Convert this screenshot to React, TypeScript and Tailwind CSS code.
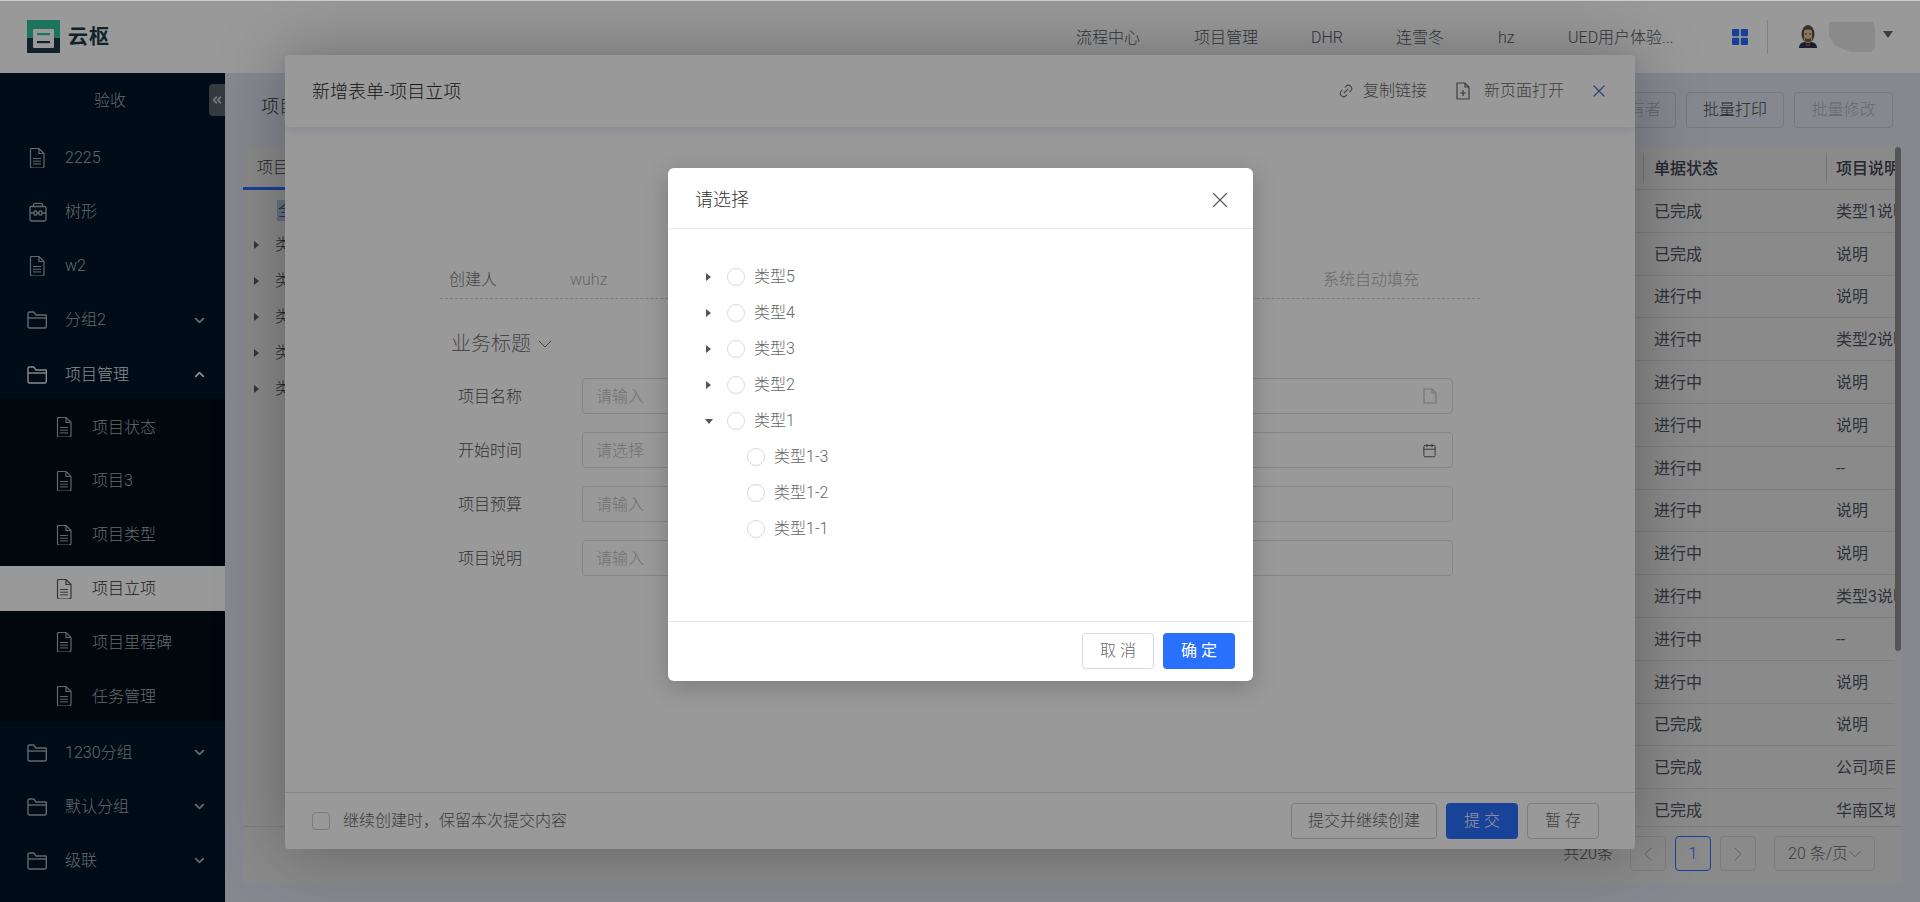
import React from "react";
import { X, ChevronDown, ChevronUp, ChevronLeft, ChevronRight, ChevronsLeft, Link2, Calendar } from "lucide-react";

const font = "font-['Roboto','Noto_Sans_CJK_SC',sans-serif] font-light";

function DocIcon({ className = "" }: { className?: string }) {
  return (
    <svg viewBox="0 0 16 20" className={`w-4 h-5 shrink-0 ${className}`} fill="none" stroke="currentColor" strokeWidth="1.2">
      <path d="M1.500 1.500a1 1 0 0 1 1-1h7.500l5 5v12.500a2 2 0 0 1-2 2h-10a1.500 1.500 0 0 1-1.500-1.500z" />
      <path d="M10 1v4.500h4.500" />
      <path d="M4 10.500h8M4 13.200h8M4 15.900h8" strokeWidth="1" />
    </svg>
  );
}

function FolderIcon() {
  return (
    <svg viewBox="0 0 20 18" className="w-5 h-[18px] shrink-0" fill="none" stroke="currentColor" strokeWidth="1.4">
      <path d="M1 4V2.500A1.500 1.500 0 0 1 2.500 1h4.200l2.300 3h9.500A.8.8 0 0 1 19.300 5v10.500a1.500 1.500 0 0 1-1.500 1.500H2.500A1.500 1.500 0 0 1 1 15.500z" />
      <path d="M1 7h18.300" />
    </svg>
  );
}

function BoxIcon() {
  return (
    <svg viewBox="0 0 18 20" className="w-[18px] h-5 shrink-0" fill="none" stroke="currentColor" strokeWidth="1.3">
      <rect x="1" y="4.500" width="16" height="14.500" rx="1.500" />
      <path d="M4.500 4.500V2.500a1.200 1.200 0 0 1 1.200-1.200h6.600a1.200 1.200 0 0 1 1.200 1.200v2" />
      <path d="M1 11h4M13 11h4M8 11h2" />
      <rect x="5" y="9" width="3" height="4" rx="1" />
      <rect x="10" y="9" width="3" height="4" rx="1" />
    </svg>
  );
}

function Logo() {
  return (
    <svg viewBox="0 0 33 33" className="w-[33px] h-[33px] shrink-0">
      <rect width="33" height="18" fill="#2fc498" />
      <rect y="18" width="33" height="15" fill="#1c3a48" />
      <rect x="6" y="9" width="21" height="19" rx="1" fill="#fff" />
      <rect x="10" y="13" width="13" height="2.200" fill="#2fc498" />
      <rect x="10" y="21" width="13" height="2.200" fill="#1c3a48" />
    </svg>
  );
}

function Avatar() {
  return (
    <svg viewBox="0 0 18 23" className="w-[18px] h-[23px] shrink-0">
      <path d="M0 23c0-4 3-6 6-6h6c3 0 6 2 6 6z" fill="#263a58" />
      <path d="M7 17l2 3 2-3v4H7z" fill="#c0392b" />
      <ellipse cx="9" cy="9" rx="6.500" ry="9" fill="#5a4e44" />
      <path d="M5 6c0-2 8-2 8 0v8c0 3-2 4-4 4s-4-1-4-4z" fill="#e8c49a" />
      <path d="M6 13c2 1.500 4 1.500 6 0v3c-1 1.500-5 1.500-6 0z" fill="#6b5a4c" />
      <circle cx="7" cy="9" r=".8" fill="#333" />
      <circle cx="11" cy="9" r=".8" fill="#333" />
    </svg>
  );
}

const topItems = [
  { label: "2225", icon: <DocIcon /> },
  { label: "树形", icon: <BoxIcon /> },
  { label: "w2", icon: <DocIcon /> },
];

const subItems = ["项目状态", "项目3", "项目类型", "项目立项", "项目里程碑", "任务管理"];

function GroupRow({ label, open }: { label: string; open?: boolean }) {
  return (
    <div className={`h-[45px] flex items-center pl-[27px] pr-[18px] ${open ? "text-[#e4e9ee]" : "text-[#a6adb4]"}`}>
      <span className="w-[38px] flex">
        <FolderIcon />
      </span>
      <span className="flex-1 text-base">{label}</span>
      {open ? <ChevronUp size={15} strokeWidth={3} /> : <ChevronDown size={15} strokeWidth={3} />}
    </div>
  );
}

function Sidebar() {
  return (
    <aside className="w-[225px] shrink-0 bg-[#001529] h-full relative overflow-hidden">
      <div className="h-[62px] pt-[17px] text-center text-base text-[#a6adb4] leading-[22px] pr-[5px]">验收</div>
      <div className="absolute right-0 top-[11px] w-4 h-8 bg-[#55606a] rounded-l-sm flex items-center justify-center text-[#c9ced3]">
        <ChevronsLeft size={14} strokeWidth={3} />
      </div>
      {topItems.map((t) => (
        <div key={t.label} className="h-[45px] mb-[9.300px] flex items-center pl-[29px] text-[#a6adb4]">
          <span className="w-[36px] flex">{t.icon}</span>
          <span className="text-base">{t.label}</span>
        </div>
      ))}
      <div className="mb-[9.300px]">
        <GroupRow label="分组2" />
      </div>
      <GroupRow label="项目管理" open />
      <div className="mt-[1px] h-[324px] overflow-hidden bg-[#000c17] pt-[6.500px]">
        {subItems.map((s) => {
          const on = s === "项目立项";
          return (
            <div
              key={s}
              className={`h-[45px] mb-[8.800px] flex items-center pl-[56px] ${on ? "bg-white text-[#333]" : "text-[#a6adb4]"}`}
            >
              <span className={`w-[36px] flex ${on ? "text-[#555]" : ""}`}>
                <DocIcon />
              </span>
              <span className="text-base pt-px">{s}</span>
            </div>
          );
        })}
      </div>
      <div className="mt-[8px]">
        <div className="mb-[9px]">
          <GroupRow label="1230分组" />
        </div>
        <div className="mb-[9px]">
          <GroupRow label="默认分组" />
        </div>
        <GroupRow label="级联" />
      </div>
    </aside>
  );
}

function Header() {
  const nav: [string, string][] = [
    ["流程中心", "w-[118px]"],
    ["项目管理", "w-[117px]"],
    ["DHR", "w-[85px]"],
    ["连雪冬", "w-[102px]"],
    ["hz", "w-[70px]"],
    ["UED用户体验...", "w-[164px]"],
  ];
  return (
    <header className="h-[73px] bg-white flex items-center pl-[27px] relative z-0">
      <Logo />
      <span className="ml-2 text-[20px] font-bold text-[#1c3a48] leading-none tracking-[1px]">云枢</span>
      <div className="flex-1" />
      {nav.map(([n, w]) => (
        <span key={n} className={`${w} text-base text-[#555b66] whitespace-nowrap pt-[2px]`}>
          {n}
        </span>
      ))}
      <svg viewBox="0 0 16 16" className="w-4 h-4 shrink-0 text-[#2b6cff]" fill="currentColor">
        <rect width="7.200" height="7.200" rx="1" />
        <rect x="8.800" width="7.200" height="7.200" rx="1" />
        <rect y="8.800" width="7.200" height="7.200" rx="1" />
        <rect x="8.800" y="8.800" width="7.200" height="7.200" rx="1" />
      </svg>
      <span className="ml-[19px] w-px h-[34px] bg-[#d8d8d8]" />
      <span className="ml-[31px]">
        <Avatar />
      </span>
      <svg viewBox="0 0 46 30" className="ml-[12px] w-[46px] h-[30px] shrink-0">
        <path d="M0 0h36l8 0 2 6v20l-4 4H22L6 24 0 14z" fill="#e6e6e6" />
      </svg>
      <span className="ml-[8px] mr-[27px] w-0 h-0 border-x-[5px] border-x-transparent border-t-[7px] border-t-[#666] -mt-[4px]" />
    </header>
  );
}

const rows: [string, string][] = [
  ["已完成", "类型1说明"],
  ["已完成", "说明"],
  ["进行中", "说明"],
  ["进行中", "类型2说明"],
  ["进行中", "说明"],
  ["进行中", "说明"],
  ["进行中", "--"],
  ["进行中", "说明"],
  ["进行中", "说明"],
  ["进行中", "类型3说明"],
  ["进行中", "--"],
  ["进行中", "说明"],
  ["已完成", "说明"],
  ["已完成", "公司项目说明"],
  ["已完成", "华南区域项目"],
];

function Main() {
  return (
    <main className="flex-1 min-w-0 bg-[#dfe3f0] pl-[18px] pr-[18px] flex flex-col overflow-hidden">
      <div className="h-[74px] shrink-0 flex items-center pl-[18px] pr-[9px]">
        <span className="text-lg text-[#333] flex-1 -mt-[6px]">项目立项</span>
        <div className="flex gap-[10px] mt-[-1px]">
          <button className="h-9 w-[110px] border border-[#c9c9c9] rounded text-base text-[#b0b0b0]">移交所有者</button>
          <button className="h-9 w-[98px] border border-[#c9c9c9] rounded text-base text-[#444]">批量打印</button>
          <button className="h-9 w-[99px] border border-[#c9c9c9] rounded text-base text-[#b0b0b0]">批量修改</button>
        </div>
      </div>
      <section className="h-[736px] bg-[#e6e6e6] rounded flex flex-col overflow-hidden">
        <div className="h-[680px] flex shrink-0">
          <div className="w-[240px] shrink-0">
            <div className="h-[43px] w-[120px] flex items-center pl-[14px] pt-[2px] border-b-[3px] border-[#2b6cff] text-base text-[#444]">
              项目类型
            </div>
            <div className="pl-[34px] mt-[10px] h-[21px] flex items-center">
              <span className="bg-[#a9bfe0] h-[21px] px-px text-base text-[#444] leading-[21px]">全部</span>
            </div>
            <div className="mt-[6px]">
              {[5, 4, 3, 2, 1].map((n) => (
                <div key={n} className="h-9 flex items-center pl-[11px] text-base text-[#444]">
                  <span className="w-0 h-0 border-y-[4px] border-y-transparent border-l-[5px] border-l-[#555] mr-[16px]" />
                  类型{n}
                </div>
              ))}
            </div>
          </div>
          <div className="flex-1 min-w-0 flex">
            <div className="flex-1 min-w-0 flex flex-col">
              <div className="h-[43px] shrink-0 flex items-center border-b border-[#d0d0d0] text-base text-[#3c4150] font-medium">
                <div className="flex-1" />
                <div className="w-[183px] h-[30px] border-l border-[#c4c4c4] pl-[10px] leading-[31px]">单据状态</div>
                <div className="w-[69px] h-[30px] border-l border-[#c4c4c4] pl-[9px] leading-[31px] overflow-hidden whitespace-nowrap">
                  项目说明
                </div>
              </div>
              <div className="h-[637px] overflow-hidden">
                {rows.map(([a, b], i) => (
                  <div key={i} className="h-[42.800px] flex items-center border-b border-[#d0d0d0] text-base text-[#4e5360] pt-[2px] font-normal">
                    <div className="flex-1" />
                    <div className="w-[183px] pl-[11px]">{a}</div>
                    <div className="w-[69px] pl-[10px] overflow-hidden whitespace-nowrap">{b}</div>
                  </div>
                ))}
              </div>
            </div>
            <div className="w-[7px] shrink-0">
              <div className="w-[6px] h-[504px] bg-[#8c8c8c] rounded-full" />
            </div>
          </div>
        </div>
        <div className="flex-1 border-t border-[#d0d0d0] flex items-start justify-end pt-[9px] pr-[27px] -mt-px">
          <span className="text-base text-[#555] leading-[35px] mr-[17px]">共20条</span>
          <span className="w-9 h-[35px] border border-[#cfcfcf] rounded flex items-center justify-center text-[#b0b0b0]">
            <ChevronLeft size={24} strokeWidth={1} />
          </span>
          <span className="ml-[9px] w-9 h-[35px] border border-[#2b6cff] rounded flex items-center justify-center text-base text-[#2b6cff]">
            1
          </span>
          <span className="ml-[9px] w-9 h-[35px] border border-[#cfcfcf] rounded flex items-center justify-center text-[#b0b0b0]">
            <ChevronRight size={24} strokeWidth={1} />
          </span>
          <span className="ml-[18px] w-[101px] h-[35px] border border-[#cfcfcf] rounded flex items-center pl-[13px] text-base text-[#666] whitespace-nowrap">
            20 条/页
            <ChevronDown size={22} strokeWidth={1} className="text-[#999] -ml-[4px] shrink-0" />
          </span>
        </div>
      </section>
    </main>
  );
}

function FormRow({ label, placeholder, icon }: { label: string; placeholder: string; icon?: React.ReactNode }) {
  return (
    <div className="h-9 mb-[18px] flex items-center ml-[18px]">
      <span className="w-[124px] text-base text-[#555] pt-px">{label}</span>
      <div className="w-[871px] h-9 border border-[#dedede] rounded flex items-center pl-[13px] pr-[15px] justify-between">
        <span className="text-base text-[#c0c0c0] pt-px">{placeholder}</span>
        <span className="text-[#c4c4c4]">{icon}</span>
      </div>
    </div>
  );
}

function Drawer() {
  return (
    <div className="absolute left-[285px] top-[55px] w-[1350px] h-[794px] z-20 bg-white rounded-sm flex flex-col shadow-[0_0_70px_rgba(0,0,0,0.3)]">
      <div className="h-[72px] shrink-0 flex items-center pl-[27px] shadow-[0_3px_8px_rgba(200,205,225,0.5)] relative">
        <span className="text-lg text-[#2a2a2a] flex-1 pt-[2px]">新增表单-项目立项</span>
        <span className="text-[#666] flex">
          <Link2 size={16} strokeWidth={1.5} className="-rotate-45" />
        </span>
        <span className="ml-[9px] text-base text-[#666]">复制链接</span>
        <svg viewBox="0 0 14 18" className="ml-[29px] w-[14px] h-[18px] text-[#666]" fill="none" stroke="currentColor" strokeWidth="1.2">
          <path d="M1 1h8l4 4v12H1z" />
          <path d="M9 1v4h4M7 8v6M4 11h6" />
        </svg>
        <span className="ml-[14px] text-base text-[#666]">新页面打开</span>
        <X size={20} strokeWidth={1.5} className="ml-[25px] mr-[26px] text-[#4f73c0]" />
      </div>
      <div className="flex-1 min-h-0 pt-[135px] px-[155px]">
        <div className="h-[37px] border-b border-dashed border-[#d0d0d0] flex items-center pl-[9px] pr-[61px] text-base">
          <span className="w-[121px] text-[#777]">创建人</span>
          <span className="flex-1 text-[#aaa]">wuhz</span>
          <span className="text-[#b0b0b0]">系统自动填充</span>
        </div>
        <div className="mt-[30px] mb-[19px] ml-[11px] h-[30px] flex items-center text-[20px] text-[#777]">
          业务标题
          <ChevronDown size={24} strokeWidth={1} className="ml-[2px]" />
        </div>
        <FormRow label="项目名称" placeholder="请输入" icon={<svg viewBox="0 0 14 16" className="w-[14px] h-4" fill="none" stroke="currentColor" strokeWidth="1.200"><path d="M1 1h8l4 4v10H1z" /><path d="M9 1v4h4" /></svg>} />
        <FormRow label="开始时间" placeholder="请选择" icon={<Calendar size={15} strokeWidth={1.5} className="text-[#555]" />} />
        <FormRow label="项目预算" placeholder="请输入" />
        <FormRow label="项目说明" placeholder="请输入" />
      </div>
      <div className="h-[57px] shrink-0 border-t border-[#dedede] flex items-center pl-[27px] pr-[36px]">
        <span className="w-[18px] h-[18px] border border-[#cfcfcf] rounded-sm" />
        <span className="ml-[13px] flex-1 text-base text-[#666]">继续创建时，保留本次提交内容</span>
        <button className="h-9 w-[146px] border border-[#cfcfcf] rounded text-base text-[#666]">提交并继续创建</button>
        <button className="ml-[9px] h-9 w-[72px] bg-[#2970ff] rounded text-base text-white">提 交</button>
        <button className="ml-[9px] h-9 w-[72px] border border-[#cfcfcf] rounded text-base text-[#666]">暂 存</button>
      </div>
    </div>
  );
}

function Radio() {
  return <span className="w-[18px] h-[18px] rounded-full border border-[#d9d9d9] bg-white shrink-0" />;
}

function TreeRow({ label, caret }: { label: string; caret: "right" | "down" }) {
  return (
    <div className="h-9 flex items-center pl-[37px]">
      <span className="w-[7px] flex items-center justify-center">
        {caret === "right" ? (
          <span className="w-0 h-0 border-y-[4px] border-y-transparent border-l-[5px] border-l-[#555]" />
        ) : (
          <span className="w-0 h-0 border-x-[4px] border-x-transparent border-t-[5px] border-t-[#555]" />
        )}
      </span>
      <span className="ml-[15px] flex">
        <Radio />
      </span>
      <span className="ml-[9px] text-base text-[#666] -mt-px">{label}</span>
    </div>
  );
}

function ChildRow({ label }: { label: string }) {
  return (
    <div className="h-9 flex items-center pl-[79px]">
      <Radio />
      <span className="ml-[9px] text-base text-[#666] -mt-px">{label}</span>
    </div>
  );
}

function Modal() {
  return (
    <div className="absolute left-[668px] top-[168px] w-[585px] h-[513px] z-40 bg-white rounded-md flex flex-col overflow-hidden shadow-[0_6px_24px_rgba(0,0,0,0.2)]">
      <div className="h-[61px] shrink-0 border-b border-[#e8e8e8] flex items-center pl-[27px] pr-[20px] justify-between">
        <span className="text-lg text-[#333] pt-[4px]">请选择</span>
        <X size={26} strokeWidth={1} className="text-[#555] mt-[3px]" />
      </div>
      <div className="flex-1 min-h-0 pt-[30px]">
        {[5, 4, 3, 2].map((n) => (
          <TreeRow key={n} label={`类型${n}`} caret="right" />
        ))}
        <TreeRow label="类型1" caret="down" />
        <ChildRow label="类型1-3" />
        <ChildRow label="类型1-2" />
        <ChildRow label="类型1-1" />
      </div>
      <div className="h-[60px] shrink-0 border-t border-[#e8e8e8] flex items-center justify-end pr-[18px] pb-[2px]">
        <button className="h-9 w-[72px] border border-[#d9d9d9] rounded text-base text-[#666] bg-white">取 消</button>
        <button className="ml-[9px] h-9 w-[72px] rounded text-base font-normal text-white bg-[#2970ff]">确 定</button>
      </div>
    </div>
  );
}

export default function App() {
  return (
    <div className={`relative w-[1920px] h-[902px] overflow-hidden bg-[#dfe3f0] ${font}`}>
      <div className="h-full flex flex-col">
        <Header />
        <div className="flex-1 min-h-0 flex">
          <Sidebar />
          <Main />
        </div>
      </div>
      <Drawer />
      <div className="absolute inset-0 z-30 bg-black/40">
        <div className="h-px bg-white/50" />
      </div>
      <Modal />
    </div>
  );
}
